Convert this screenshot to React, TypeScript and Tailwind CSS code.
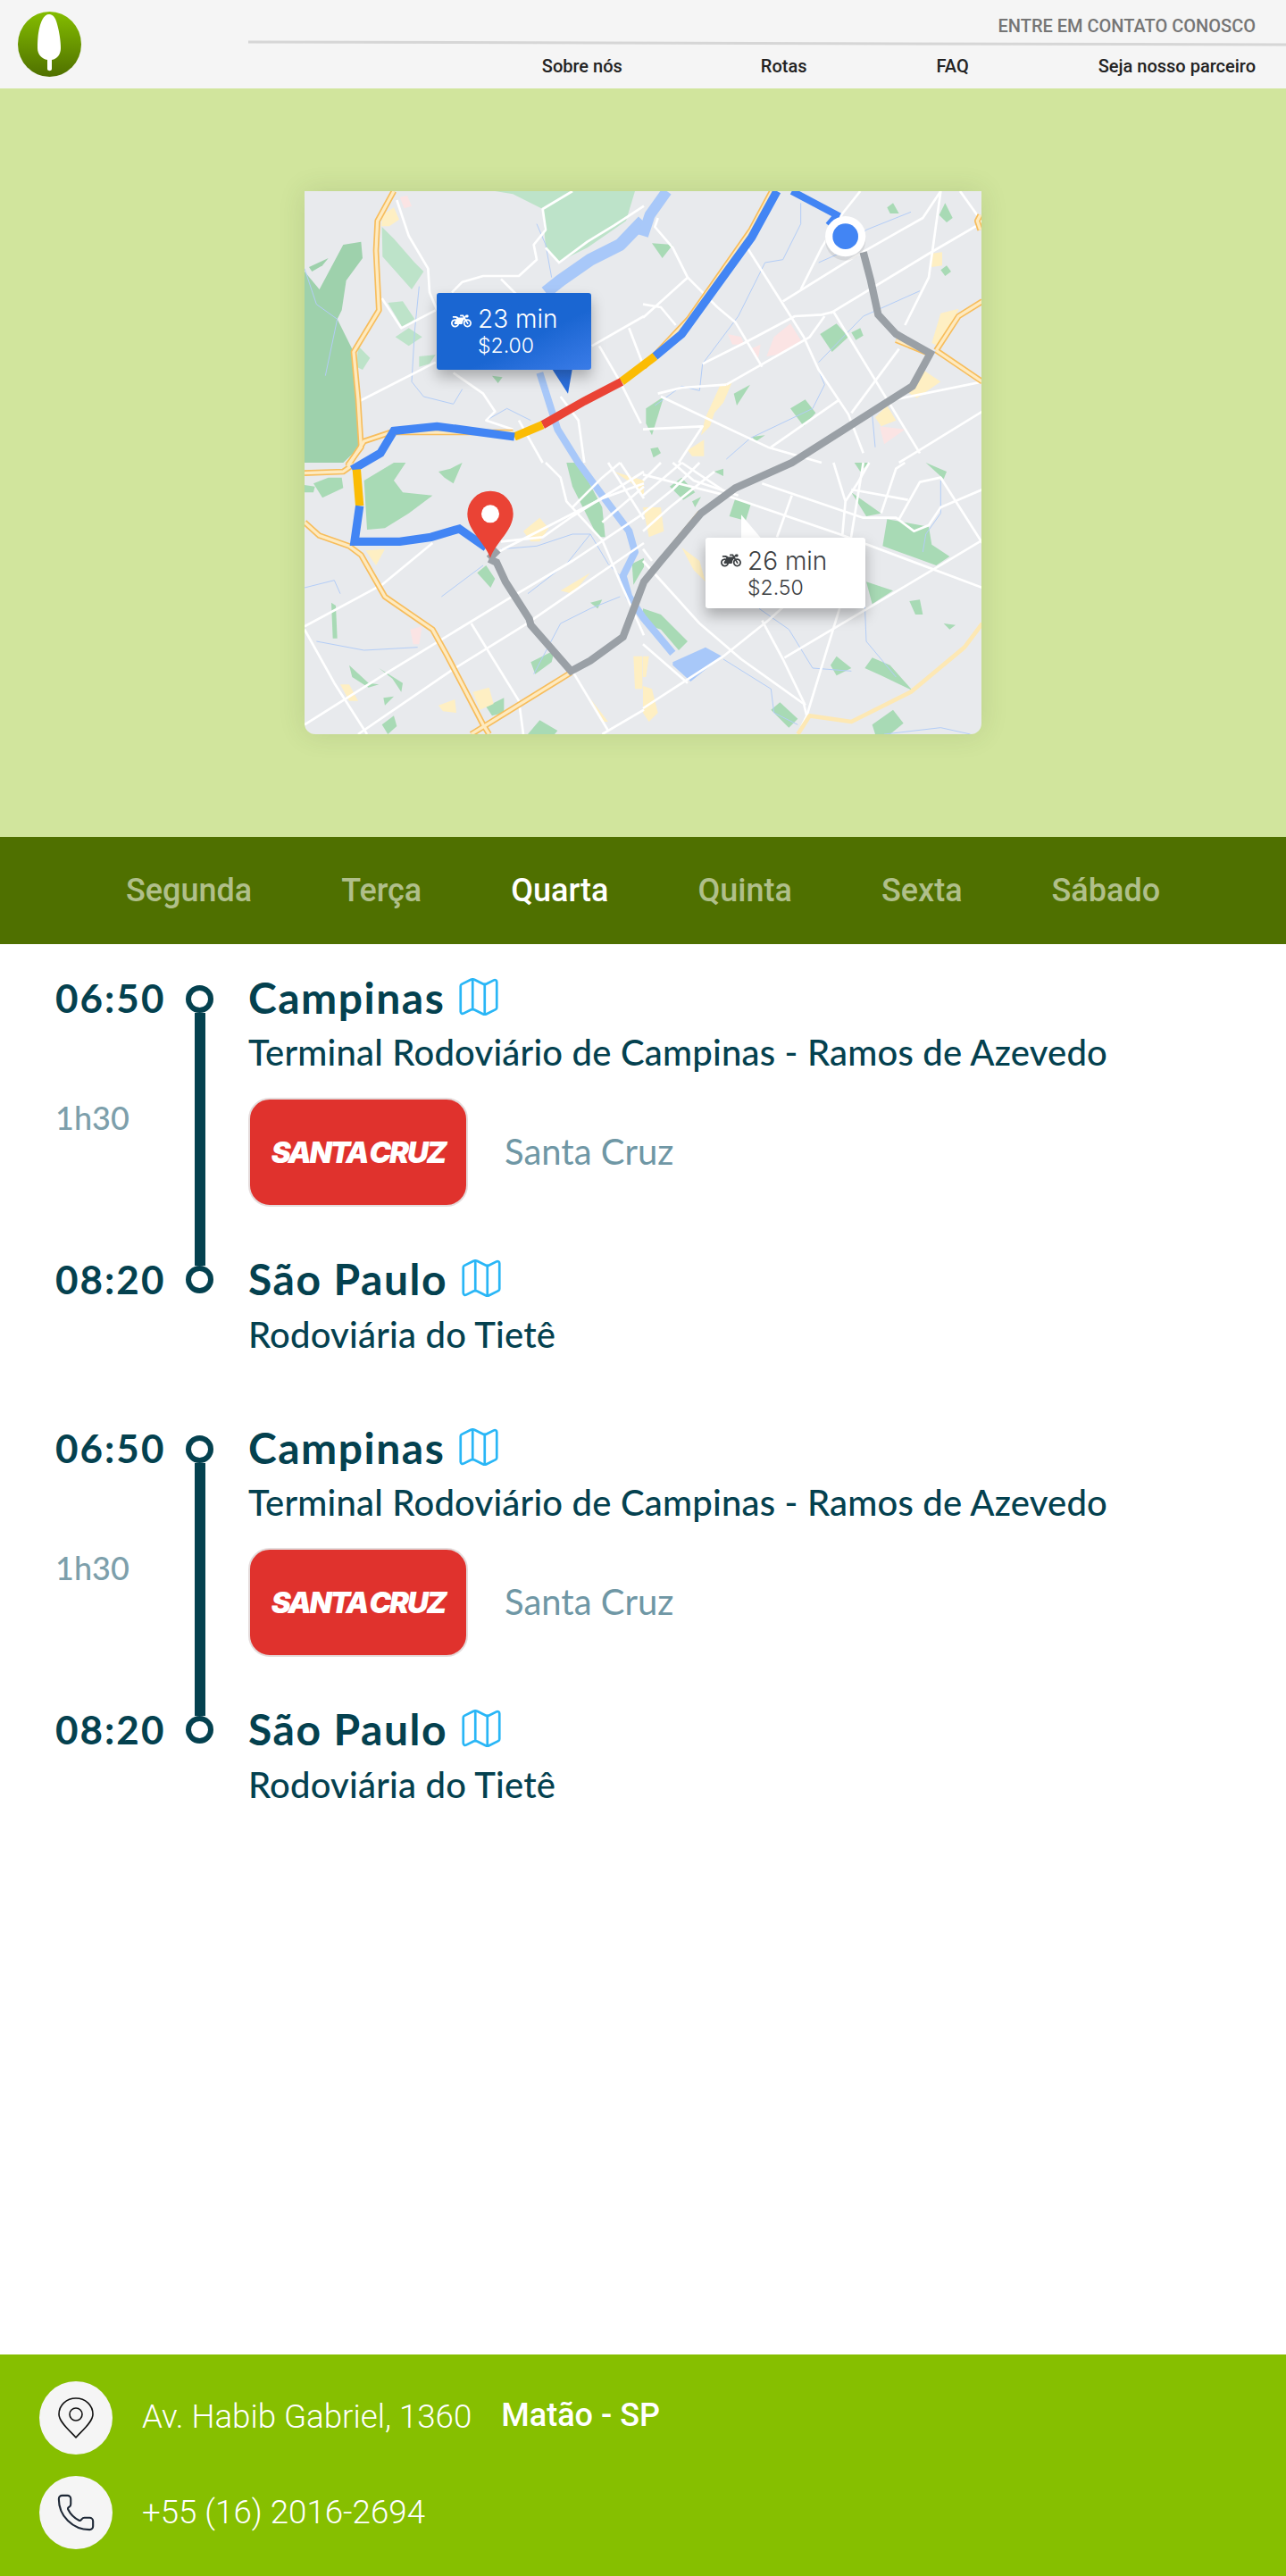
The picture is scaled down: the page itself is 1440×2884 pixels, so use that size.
import React from "react";
import { Map as MapIcon, Phone } from "lucide-react";
import { FaMotorcycle } from "react-icons/fa";

type Q = { t: string; white: string[]; green: string[]; light: string[]; dark: string[]; pale: string[]; pink: string[]; stream: string[] };

const quads: Q[] = [
  {
    t: "translate(0,0)",
    dark: [
      "0,270 50,330 130,180 190,170 195,225 140,300 125,400 110,430 160,530 175,700 185,860 130,912 0,912",
      "15,255 80,225 60,250 25,270",
    ],
    light: [
      "640,0 1110,0 1080,100 950,190 850,240 810,190 800,60 700,10",
      "260,120 300,160 370,240 400,270 360,330 262,220",
      "280,375 330,370 370,430 330,460",
      "305,490 350,460 395,490 350,520",
      "385,555 440,550 420,580 385,590",
      "180,520 220,560 195,600 175,590",
    ],
    green: ["630,620 665,625 650,645"],
    pale: ["262,80 300,55 318,95 285,118 258,118"],
    pink: ["320,20 345,15 360,50 335,58"],
    white: [
      "310,30 350,150 415,260 420,340 445,400",
      "260,360 325,460 440,400",
      "185,705 440,575",
      "495,340 530,305 600,285 720,285 780,230 770,180 810,130 800,60 900,0",
      "810,190 855,240 950,170 1040,115 1140,50",
      "965,520 1140,420",
      "990,520 1060,640 1130,780",
      "1090,460 1140,590",
      "500,610 600,680 640,740 610,770 700,800",
      "660,295 710,345",
      "860,690 920,770 940,912",
      "720,770 800,912",
    ],
    stream: [
      "360,640 370,470 385,320",
      "360,640 400,690 500,715 530,665",
      "0,260 40,380 110,430 70,620",
      "610,770 680,730 760,770",
      "780,110 810,180 830,290",
    ],
  },
  {
    t: "translate(1137,0)",
    dark: [],
    light: [],
    green: [
      "595,480 650,445 690,490 635,540",
      "700,475 730,460 740,485 715,500",
      "495,730 545,700 580,745 540,790",
      "30,175 100,180 65,225",
      "820,55 840,40 860,75 830,75",
      "995,80 1015,40 1040,90 1020,105",
      "1000,265 1020,250 1035,270 1015,285",
      "365,825 410,820 380,840",
      "25,865 50,860 60,880 35,895",
      "10,730 70,690 30,820 10,780",
      "305,680 360,650 315,720",
    ],
    pale: [
      "970,510 1000,410 1060,395 1040,450 990,520",
      "880,670 940,600 1000,640 920,695",
      "780,760 820,720 850,770 800,790",
      "965,210 1005,205 1005,250 970,255",
      "150,870 205,835 205,890 165,890",
      "260,650 300,640 270,710 240,745 225,790 195,820 210,760",
    ],
    pink: [
      "415,555 440,490 495,445 530,500 530,510 450,550",
      "285,480 330,490 340,515 300,515",
      "795,790 880,800 810,850",
      "360,530 395,515 385,570",
    ],
    white: [
      "0,425 150,290 100,190 40,120 50,90",
      "350,190 540,490 590,600 690,750 740,880",
      "470,370 720,215 940,90 1000,0",
      "630,410 960,210 1140,105",
      "530,330 600,190 670,75 730,0",
      "200,580 340,510 510,420 600,415 640,405",
      "280,650 560,490 610,420",
      "640,405 930,880",
      "50,680 130,660 280,650",
      "60,690 420,860 600,912",
      "700,745 860,530",
      "845,700 1140,640",
      "430,860 660,700",
      "860,912 1140,740",
      "150,290 250,390 310,440 400,590",
      "0,380 60,390 110,450",
      "0,800 200,790 120,912",
      "880,450 960,290 1000,0",
      "1065,0 1140,105",
    ],
    stream: [
      "530,40 530,110 470,230 410,240 320,420 200,580 190,670 130,655 40,720",
      "590,240 680,200 750,130 900,70",
      "590,575 740,420 930,335",
      "585,590 610,650 570,730 360,830 280,900",
      "770,750 780,860",
    ],
  },
  {
    t: "translate(0,912)",
    dark: [],
    light: [],
    green: [
      "200,60 300,0 340,0 300,60 330,100 430,110 350,170 270,220 210,225",
      "450,30 490,20 530,0 500,70 470,50",
      "0,75 35,80 30,100 0,100",
      "30,70 80,50 125,50 130,85 60,118",
      "580,370 610,345 640,390 625,420",
      "760,670 840,630 830,670 775,710",
      "610,820 670,790 670,840 630,850",
      "750,912 790,865 850,900 840,912",
      "880,0 920,0 1000,150 1010,250 985,250 900,80",
      "265,790 300,785 270,815",
      "260,880 300,850 310,885 280,912",
      "150,680 215,740 250,745 215,755 160,720",
      "250,690 330,740 325,770 295,725",
      "1100,340 1140,320 1140,350 1105,410",
      "960,470 1000,460 985,490",
      "90,470 105,480 110,590 95,590",
    ],
    pale: [
      "205,295 270,290 240,345",
      "735,230 790,185 820,220 790,265 760,265",
      "860,430 960,370 900,440",
      "565,770 620,755 635,810 590,830",
      "450,815 505,795 510,840 465,835",
      "120,745 150,745 180,800 150,800",
      "1105,650 1135,650 1135,760 1110,760",
      "950,780 1020,870 1000,870",
      "1040,30 1140,60 1140,120 1100,70",
    ],
    pink: ["355,560 395,550 385,610 365,610"],
    white: [
      "0,550 260,410 430,270",
      "0,880 270,710 680,460 900,330 1140,170",
      "180,912 490,700 740,545 1140,270",
      "560,540 720,800 735,912",
      "0,560 100,740 210,912",
      "900,700 1020,900",
      "660,265 800,250 900,180 1140,30",
      "810,0 860,50 880,130 1000,260 1060,400 1140,580",
      "1000,912 1140,830",
      "1140,70 1000,120 650,300",
      "1020,0 1140,190",
      "1060,0 1140,120",
      "900,150 1000,50 1060,0",
      "1000,200 1140,80",
    ],
    stream: [
      "460,450 540,390 600,345",
      "660,290 780,280 900,240 960,240 1020,340 1060,380",
      "750,440 880,340 960,240",
      "0,420 100,395 120,440",
      "770,710 860,540 960,490 1060,450",
      "40,600 200,630 380,620",
    ],
  },
  {
    t: "translate(1137,912)",
    dark: [],
    light: [],
    green: [
      "90,80 130,50 175,100 135,125",
      "290,180 310,120 362,140 345,195",
      "820,190 960,215 970,275 1030,315 985,345 805,280",
      "700,100 800,170 750,180",
      "750,400 840,430 770,475",
      "895,465 930,460 940,510 915,510",
      "1010,540 1050,545 1030,560",
      "630,680 650,650 700,690 650,715",
      "745,690 770,655 830,680 905,765 800,715",
      "430,830 460,805 520,860 490,890",
      "770,880 840,830 875,875 830,912 780,912",
      "0,490 60,510 150,600 120,630 60,560 0,540",
      "710,0 730,30 760,0",
      "950,0 1020,30 1010,55",
      "240,30 270,20 270,45",
      "165,130 195,115 175,150",
    ],
    pale: [
      "0,150 60,150 70,230 20,250",
      "130,285 190,330 210,400 170,360",
      "0,750 30,760 50,840 20,870 0,840",
      "0,650 20,650 10,720 0,720",
    ],
    pink: [],
    white: [
      "0,40 280,110 660,240 1140,420",
      "0,330 190,540 330,660 540,810 550,850",
      "550,850 660,490 740,0",
      "475,655 990,350 1140,260",
      "0,825 270,650 420,530 510,450",
      "640,0 680,130 670,240",
      "400,70 740,185 850,185 910,230 960,210 1000,150 1140,90",
      "500,110 450,250",
      "860,190 930,65 1000,50 1140,270",
      "800,170 850,20 880,0",
      "680,130 720,70 760,0",
      "400,530 470,660 545,815",
      "0,610 150,740",
      "700,90 890,125",
      "30,330 0,290",
      "0,170 100,90 190,0",
      "0,110 130,0",
      "0,60 60,0",
      "100,0 170,60 320,110",
      "0,230 90,150 240,30",
      "550,850 520,912",
      "130,0 280,100",
    ],
    stream: [
      "740,350 750,600 850,720",
      "390,490 490,560 570,690 700,700",
      "270,660 430,760 440,840 520,880",
      "1000,60 1000,170 950,240 940,300",
      "810,912 1000,890 1100,912",
    ],
  },
];

const glob = {
  orange: [
    "300,0 245,100 240,200 250,400 165,540 180,700 190,860 145,920",
    "145,925 200,840 290,810 700,810",
    "0,947 130,942 165,917",
    "0,1112 50,1157 150,1192 190,1222 270,1362 430,1472 480,1562 600,1792 620,1824",
    "560,1824 895,1617",
    "2277,370 2197,420 2122,535",
    "2122,535 2277,640",
    "1987,500 2097,545",
    "1140,590 1290,430 1500,130 1570,0",
    "2270,80 2260,100 2270,130",
    "1197,1242 1330,1080",
  ],
  water: [
    "1137,100 1060,180 960,230 860,300 810,340",
    "790,610 850,800 920,912 1000,1022 1090,1142 1110,1212 1070,1292 1090,1362 1137,1432 1237,1552",
    "1217,0 1160,80 1137,150",
  ],
  pond: "1237,1582 1347,1532 1402,1562 1297,1647 1237,1592",
};

const gray = "1877,205 1902,300 1927,415 1987,480 2102,545 2042,655 1637,912 1447,997 1332,1082 1197,1242 1140,1312 1070,1497 960,1577 895,1612 760,1457 755,1437 675,1312 645,1247 620,1235";

function RouteMap() {
  return (
    <svg viewBox="0 0 2274 1824" className="block w-full h-full blur-[0.4px]" aria-hidden="true">
      <defs>
        <linearGradient id="tailBlue" x1="0" y1="0" x2="0" y2="1">
          <stop offset="0" stopColor="#2f74e2" />
          <stop offset="1" stopColor="#2a6ddb" />
        </linearGradient>
      </defs>
      <rect width="2274" height="1824" fill="#e8eaed" />
      {quads.map((q) => (
        <g key={q.t} transform={q.t}>
          {q.dark.map((p) => <polygon key={p} points={p} fill="#9ed1ac" />)}
          {q.light.map((p) => <polygon key={p} points={p} fill="#bde3c9" />)}
          {q.green.map((p) => <polygon key={p} points={p} fill="#a8dab5" />)}
          {q.pale.map((p) => <polygon key={p} points={p} fill="#feefc3" />)}
          {q.pink.map((p) => <polygon key={p} points={p} fill="#fbe4e4" />)}
        </g>
      ))}
      <polyline points={glob.water[0]} fill="none" stroke="#a8c8f9" strokeWidth={42} strokeLinejoin="round" />
      <polyline points={glob.water[1]} fill="none" stroke="#a8c8f9" strokeWidth={24} strokeLinejoin="round" />
      <polyline points={glob.water[2]} fill="none" stroke="#a8c8f9" strokeWidth={36} strokeLinejoin="round" />
      <polygon points={glob.pond} fill="#a8c8f9" />
      {quads.map((q) => (
        <g key={q.t + "s"} transform={q.t}>
          {q.stream.map((p) => <polyline key={p} points={p} fill="none" stroke="#b3cdf7" strokeWidth={3} strokeLinejoin="round" />)}
          {q.white.map((p) => <polyline key={p} points={p} fill="none" stroke="#ffffff" strokeWidth={8} strokeLinejoin="round" />)}
        </g>
      ))}
      {glob.orange.map((p) => <polyline key={p} points={p} fill="none" stroke="#f7bd5c" strokeWidth={20} strokeLinejoin="round" />)}
      {glob.orange.map((p) => <polyline key={p + "c"} points={p} fill="none" stroke="#feeabf" strokeWidth={10} strokeLinejoin="round" />)}
      <polyline points="2277,1452 2217,1532 2037,1682 1837,1782 1697,1762 1657,1824" fill="none" stroke="#fde8b4" strokeWidth={14} strokeLinejoin="round" />

      <polyline points={gray} fill="none" stroke="#9aa0a6" strokeWidth={25} strokeLinejoin="miter" />
      <polyline points="620,1235 650,1205" fill="none" stroke="#9aa0a6" strokeWidth={25} />
      <polyline points="1587,0 1502,155 1267,480 1177,555" fill="none" stroke="#4285f4" strokeWidth={28} strokeLinejoin="miter" />
      <polyline points="1177,555 1065,640" fill="none" stroke="#fbbc04" strokeWidth={28} />
      <polyline points="1065,640 940,705 800,785" fill="none" stroke="#ea4335" strokeWidth={28} />
      <polyline points="800,785 705,825" fill="none" stroke="#fbbc04" strokeWidth={28} />
      <polyline points="705,825 445,790 300,805 255,880 160,935" fill="none" stroke="#4285f4" strokeWidth={28} strokeLinejoin="miter" />
      <polyline points="175,935 185,1057" fill="none" stroke="#fbbc04" strokeWidth={28} />
      <polyline points="185,1057 168,1177 320,1177 425,1162 520,1134 610,1197" fill="none" stroke="#4285f4" strokeWidth={28} strokeLinejoin="miter" />
      <polyline points="1637,0 1797,85" fill="none" stroke="#4285f4" strokeWidth={24} />
      <polyline points="1790,80 1760,115" fill="none" stroke="#4285f4" strokeWidth={24} />
      <circle cx="1817" cy="165" r="68" fill="#000000" opacity="0.08" />
      <circle cx="1817" cy="152" r="68" fill="#ffffff" />
      <circle cx="1817" cy="152" r="43" fill="#4285f4" />
      <path d="M624 1232C606 1180 547 1140 547 1084A77 77 0 1 1 701 1084C701 1140 642 1180 624 1232Z" fill="#ea4335" />
      <circle cx="624" cy="1084" r="30" fill="#ffffff" />
      <polygon points="830,595 900,595 885,680" fill="url(#tailBlue)" />
      <polygon points="1467,1087 1467,1170 1537,1170" fill="#ffffff" />
    </svg>
  );
}

function Trip() {
  const teal = "text-[#04414f]";
  const time = `font-['Lato'] font-bold text-[44px] tracking-[2px] leading-none pb-[3px] ${teal}`;
  const city = `font-['Lato'] font-bold text-[48px] tracking-[1.5px] leading-none pb-[3px] ${teal}`;
  const station = `font-['Lato'] text-[40px] tracking-[0.2px] leading-none font-medium ${teal}`;
  return (
    <div className="grid grid-cols-[208px_31px_1fr] grid-rows-[60px_60px_195px_60px_62px] mb-[67px] last:mb-0">
      <div className={`pl-[62px] flex items-center ${time}`}>06:50</div>
      <div className="col-start-2 row-start-1 row-span-4 flex flex-col items-center py-[15px]">
        <div className="w-[31px] h-[31px] rounded-full border-[6px] border-[#04414f] bg-white shrink-0" />
        <div className="w-3 flex-1 bg-[#04414f]" />
        <div className="w-[31px] h-[31px] rounded-full border-[6px] border-[#04414f] bg-white shrink-0" />
      </div>
      <div className="col-start-3 row-start-1 pl-[39px] flex items-center gap-[11px]">
        <span className={city}>Campinas</span>
        <MapIcon size={54} strokeWidth={1.2} className="text-[#29b6f6] mb-[5px]" />
      </div>
      <div className={`col-start-3 row-start-2 pl-[39px] flex items-center ${station}`}>Terminal Rodoviário de Campinas - Ramos de Azevedo</div>
      <div className="col-start-1 row-start-3 pl-[62px] pt-[25px]">
        <span className="font-['Lato'] text-[36px] leading-none font-medium text-[#7d9fab]">1h30</span>
      </div>
      <div className="col-start-3 row-start-3 pl-[39px] pt-[21px] flex items-start gap-[41px]">
        <div className="w-[246px] h-[122px] rounded-[24px] bg-[#e0322d] border-2 border-[#e4dcdc] flex items-center justify-center">
          <span className="font-['Inter'] font-black italic text-[33px] leading-none tracking-[-2.2px] [word-spacing:-2px] text-white">SANTA CRUZ</span>
        </div>
        <span className="font-['Lato'] text-[40px] leading-none text-[#6f97a5] mt-[40px]">Santa Cruz</span>
      </div>
      <div className={`col-start-1 row-start-4 pl-[62px] flex items-center ${time}`}>08:20</div>
      <div className="col-start-3 row-start-4 pl-[39px] flex items-center gap-[11px]">
        <span className={city}>São Paulo</span>
        <MapIcon size={54} strokeWidth={1.2} className="text-[#29b6f6] mb-[5px]" />
      </div>
      <div className={`col-start-3 row-start-5 pl-[39px] flex items-center ${station}`}>Rodoviária do Tietê</div>
    </div>
  );
}

export default function App() {
  const days = ["Segunda", "Terça", "Quarta", "Quinta", "Sexta", "Sábado"];
  return (
    <div className="w-[1440px] h-[2884px] flex flex-col bg-white font-['Roboto'] overflow-hidden">
      <header className="h-[99px] shrink-0 bg-[#f5f5f5] flex">
        <svg width="71" height="73" viewBox="0 0 71 73" className="ml-5 mt-[13px] shrink-0" aria-hidden="true">
          <defs>
            <linearGradient id="logoGrad" x1="0" y1="0" x2="0" y2="1">
              <stop offset="0" stopColor="#84bd00" />
              <stop offset="1" stopColor="#4f7000" />
            </linearGradient>
          </defs>
          <ellipse cx="35.5" cy="36.5" rx="35.5" ry="36.5" fill="url(#logoGrad)" />
          <path d="M35 3C29 3 25 11 23 24C22 31 22 38 22 41C22 48 27 53 33 54L33 64C33 67 38 67 38 64L38 54C44 53 48 48 48 41C48 35 47 26 45 18C43 8 40 3 35 3Z" fill="#ffffff" />
        </svg>
        <div className="flex-1 ml-[187px] flex flex-col">
          <div className="h-[47px] flex items-center justify-end pr-[34px] pt-[10px] text-[20px] font-medium text-[#757575]">ENTRE EM CONTATO CONOSCO</div>
          <div className="h-[3px] bg-[#d6d6d6] rotate-[0.15deg]" />
          <nav className="flex-1 flex items-center justify-end gap-[145px] pr-[34px] pb-[2px] text-[20px] font-medium text-[#222222]">
            <span className="mr-[10px]">Sobre nós</span>
            <span>Rotas</span>
            <span>FAQ</span>
            <span>Seja nosso parceiro</span>
          </nav>
        </div>
      </header>

      <section className="h-[838px] shrink-0 bg-[#d1e59d] pt-[115px] flex justify-center">
        <div className="relative w-[758px] h-[608px] shadow-[0_0_30px_rgba(60,80,40,0.14)] rounded-b-[12px]">
          <div className="w-full h-full overflow-hidden rounded-b-[12px]">
            <RouteMap />
          </div>
          <div className="absolute left-[148px] top-[114px] w-[173px] h-[86px] rounded-[3px] bg-gradient-to-br from-[#1a66d2] from-60% to-[#3a7ce8] shadow-[0_8px_16px_rgba(0,0,0,0.28)] text-white flex">
            <div className="w-[45px] flex justify-end pt-[20px] pr-[6px]">
              <FaMotorcycle size={23} />
            </div>
            <div className="pl-[1px] pt-[12px] font-['Inter']">
              <div className="text-[28px] leading-[34px] font-light">23 min</div>
              <div className="text-[23px] leading-[26px] font-light">$2.00</div>
            </div>
          </div>
          <div className="absolute left-[449px] top-[388px] w-[179px] h-[79px] rounded-[3px] bg-white shadow-[0_8px_16px_rgba(0,0,0,0.28)] text-[#3c4043] flex">
            <div className="w-[46px] flex justify-end pt-[14px] pr-[6px]">
              <FaMotorcycle size={23} />
            </div>
            <div className="pl-[1px] pt-[9px] font-['Inter']">
              <div className="text-[28px] leading-[34px] font-light">26 min</div>
              <div className="text-[23px] leading-[26px] font-light">$2.50</div>
            </div>
          </div>
        </div>
      </section>

      <nav className="h-[120px] shrink-0 bg-[#4f7000] flex items-center justify-center gap-[100px] text-[36px] font-medium">
        {days.map((d) => (
          <span key={d} className={d === "Quarta" ? "text-white" : "text-[#b0bf8a]"}>{d}</span>
        ))}
      </nav>

      <main className="flex-1 pt-[31px]">
        <Trip />
        <Trip />
      </main>

      <footer className="h-[248px] shrink-0 bg-[#86bf00] pl-11 pt-[30px] flex flex-col gap-6 text-white">
        <div className="flex items-center h-[82px]">
          <div className="w-[82px] h-[82px] rounded-full bg-[#f5f5f5] flex items-center justify-center shrink-0">
            <svg width="42" height="48" viewBox="0 0 42 48" fill="none" stroke="#111111" strokeWidth="1.6" aria-hidden="true">
              <path d="M21 46C16 40 2 29 2 20C2 9.5 10.5 2 21 2C31.5 2 40 9.5 40 20C40 29 26 40 21 46Z" strokeLinejoin="round" />
              <circle cx="21" cy="20" r="7" />
            </svg>
          </div>
          <span className="ml-[33px] text-[36.7px] font-light leading-none mt-[-1px]">Av. Habib Gabriel, 1360</span>
          <span className="ml-[33px] text-[36px] font-medium leading-none mt-[-6px]">Matão - SP</span>
        </div>
        <div className="flex items-center h-[82px]">
          <div className="w-[82px] h-[82px] rounded-full bg-[#f5f5f5] flex items-center justify-center shrink-0">
            <Phone size={46} strokeWidth={1.1} className="text-[#1f2937]" />
          </div>
          <span className="ml-[33px] text-[36.7px] font-light leading-none">+55 (16) 2016-2694</span>
        </div>
      </footer>
    </div>
  );
}
